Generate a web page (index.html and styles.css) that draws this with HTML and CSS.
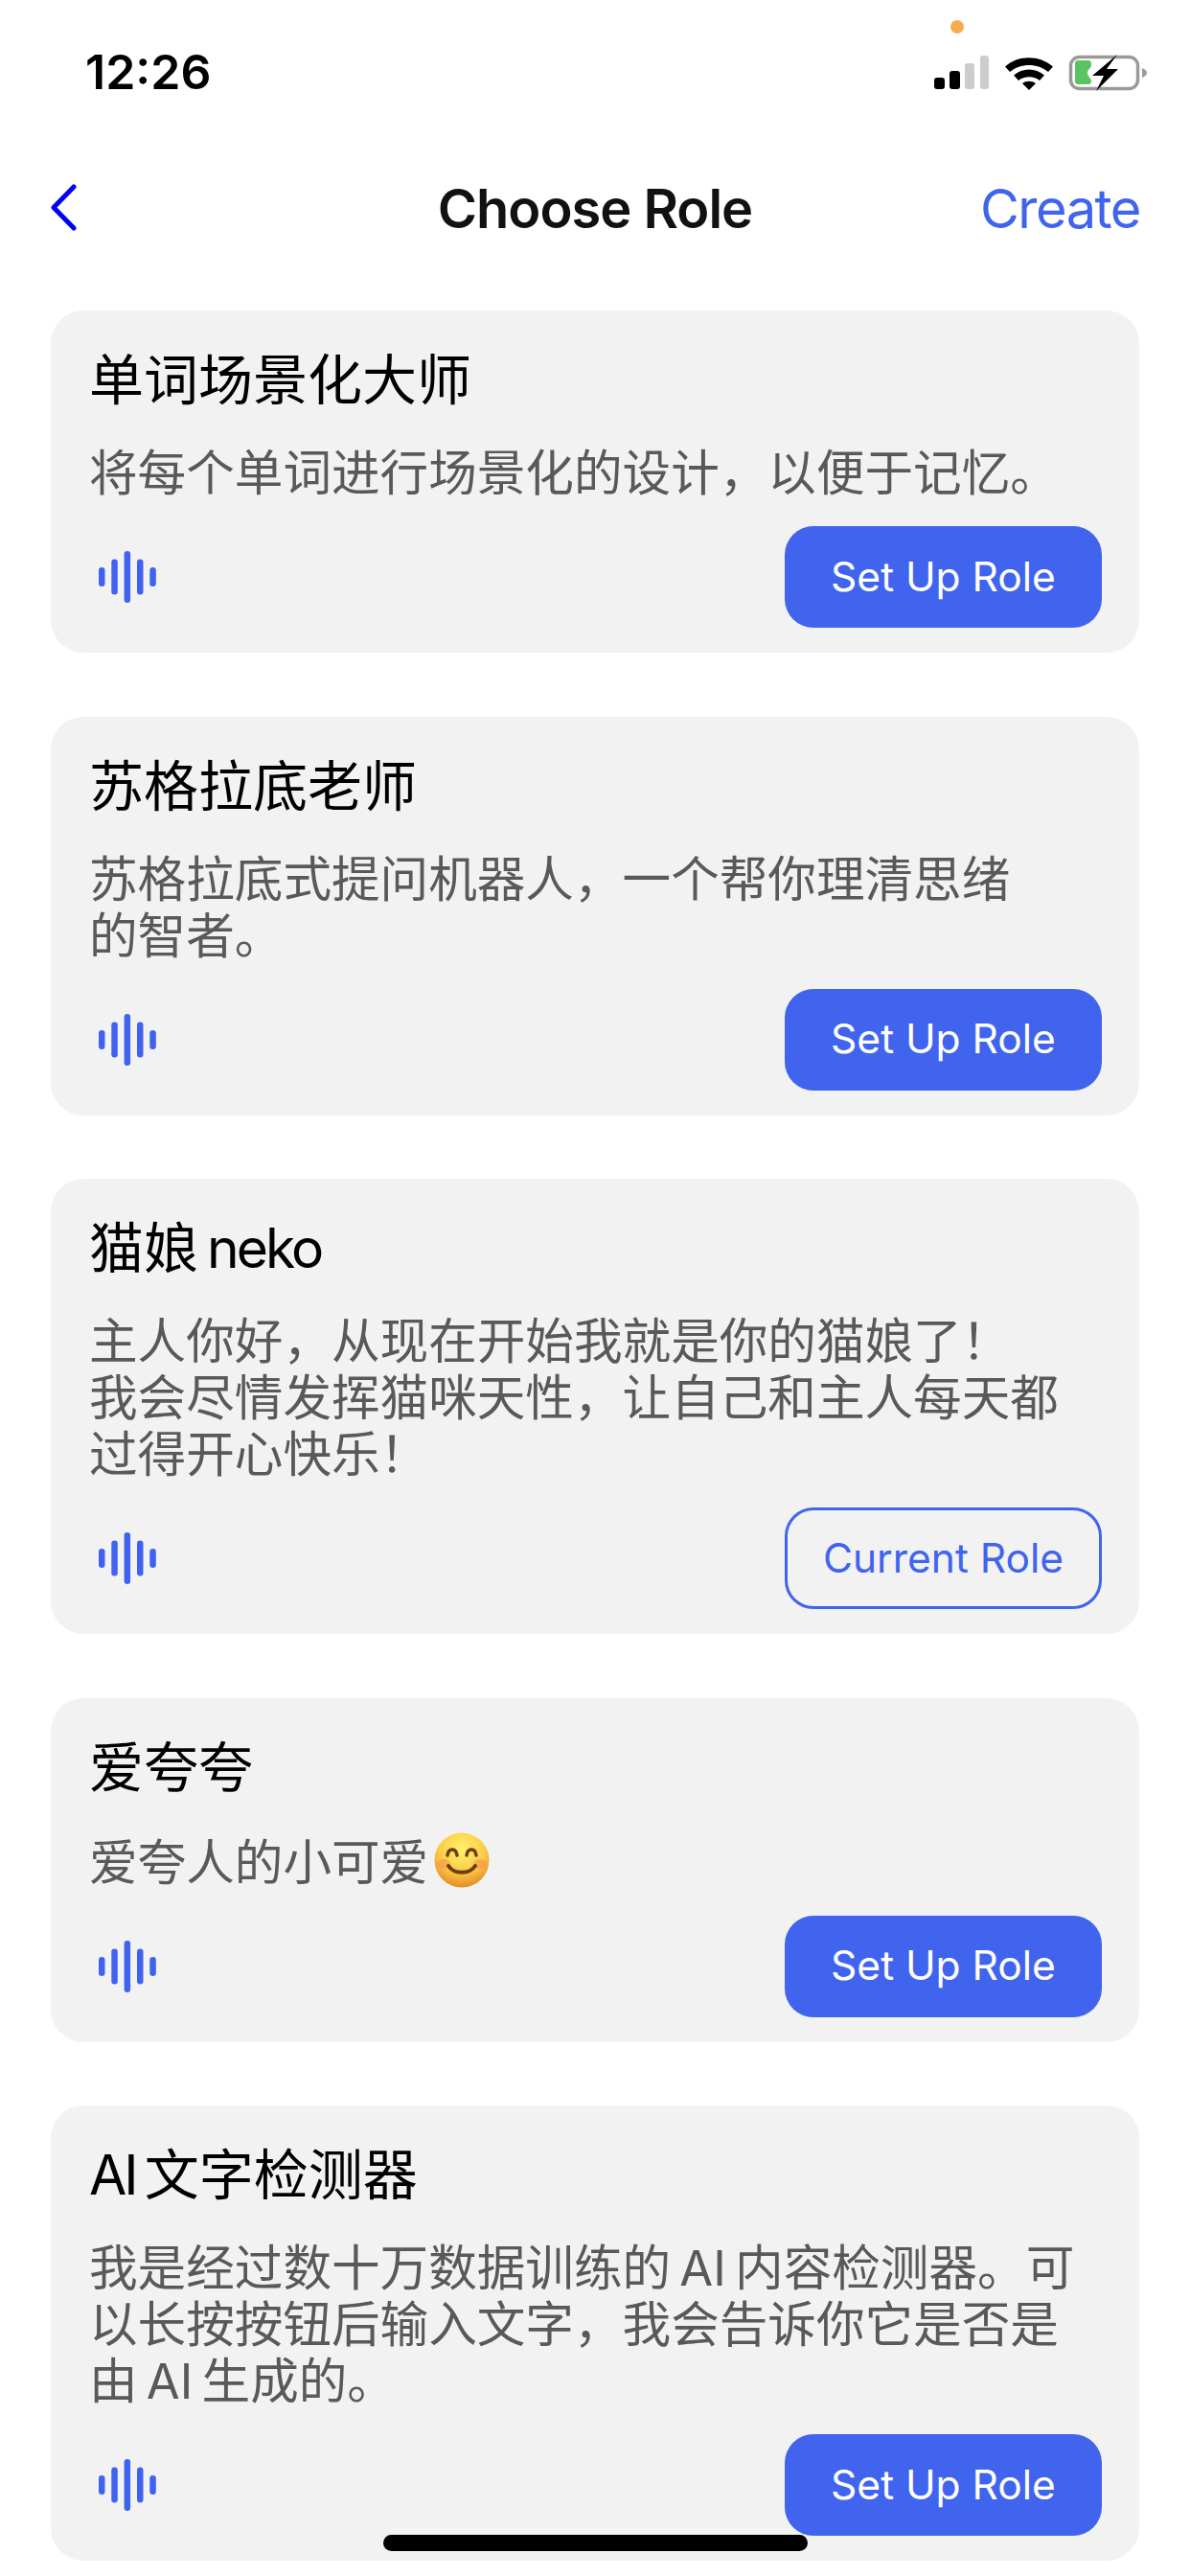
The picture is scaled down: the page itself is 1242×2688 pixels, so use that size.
FILE: index.html
```html
<!DOCTYPE html>
<html lang="zh-CN">
<head>
<meta charset="utf-8">
<title>Choose Role</title>
<link rel="stylesheet" href="styles.css">
</head>
<body>
<svg class="defs" width="0" height="0" aria-hidden="true">
  <symbol id="voice" viewBox="0 0 60 54">
    <rect x="0" y="17" width="6.5" height="20" rx="3.25"/>
    <rect x="13.3" y="8.5" width="6.5" height="37" rx="3.25"/>
    <rect x="26.6" y="0" width="6.5" height="54" rx="3.25"/>
    <rect x="40" y="8.5" width="6.5" height="37" rx="3.25"/>
    <rect x="53.3" y="17" width="6.5" height="20" rx="3.25"/>
  </symbol>
</svg>
<div class="screen">
  <header class="status">
    <span class="time">12:26</span>
    <span class="dot"></span>
    <svg class="status-icons" width="222" height="38" viewBox="0 0 222 38">
      <rect x="0" y="24" width="11" height="12" rx="3" fill="#000"/>
      <rect x="16" y="17" width="11" height="19" rx="3" fill="#000"/>
      <rect x="32" y="9" width="10" height="27" rx="3" fill="#ccc"/>
      <rect x="48" y="1" width="9" height="35" rx="3" fill="#ccc"/>
      <path d="M74 12.5C87 0 110 0 124 12.5L119 18C108 8.500 90 8.500 79 18Z" fill="#000"/>
      <path d="M83 21.500C92 13.500 106 13.500 115 21.500L110 27C104 22 94 22 88 27Z" fill="#000"/>
      <path d="M92 30C96 27 102 27 106 30L99 37Z" fill="#000"/>
      <rect x="142.500" y="2.500" width="70" height="33" rx="9" fill="none" stroke="#9a9a9a" stroke-width="3.500"/>
      <path d="M217 14C220 15 222 17 222 19C222 21 220 23 217 24Z" fill="#9a9a9a"/>
      <path d="M150 6H161C164 6 164 9 164 11C164 14 160 15 160 19C160 23 164 25 164 27C164 30 163 31 161 31H150C148 31 147 30 147 28V9C147 7 148 6 150 6Z" fill="#5ac463"/>
      <path d="M191 0L165 22H177L169 38L192 15H180Z" fill="#000"/>
    </svg>
  </header>
  <nav class="nav">
    <svg class="back" width="30" height="49" viewBox="0 0 30 49"><path d="M24 3L3 24.500L24 46" fill="none" stroke="#0000f5" stroke-width="5" stroke-linecap="round" stroke-linejoin="round"/></svg>
    <h1 class="nav-title">Choose Role</h1>
    <span class="nav-action">Create</span>
  </nav>
  <main class="list">
    <section class="card">
      <h2 class="card-title">单词场景化大师</h2>
      <p class="card-desc">将每个单词进行场景化的设计，以便于记忆。</p>
      <div class="card-foot">
        <svg class="voice" width="60" height="54"><use href="#voice"/></svg>
        <button class="btn">Set Up Role</button>
      </div>
    </section>
    <section class="card">
      <h2 class="card-title">苏格拉底老师</h2>
      <p class="card-desc">苏格拉底式提问机器人，一个帮你理清思绪<br>的智者。</p>
      <div class="card-foot">
        <svg class="voice" width="60" height="54"><use href="#voice"/></svg>
        <button class="btn">Set Up Role</button>
      </div>
    </section>
    <section class="card">
      <h2 class="card-title">猫娘 <span class="latin">neko</span></h2>
      <p class="card-desc">主人你好，从现在开始我就是你的猫娘了！<br>我会尽情发挥猫咪天性，让自己和主人每天都<br>过得开心快乐！</p>
      <div class="card-foot">
        <svg class="voice" width="60" height="54"><use href="#voice"/></svg>
        <button class="btn btn-current">Current Role</button>
      </div>
    </section>
    <section class="card">
      <h2 class="card-title">爱夸夸</h2>
      <p class="card-desc">爱夸人的小可爱<svg class="emoji" width="58" height="58" viewBox="0 0 58 58">
        <defs>
          <radialGradient id="face" cx="50%" cy="30%" r="70%">
            <stop offset="0%" stop-color="#fff36b"/>
            <stop offset="60%" stop-color="#fbcb47"/>
            <stop offset="100%" stop-color="#e58c26"/>
          </radialGradient>
        </defs>
        <circle cx="29" cy="29" r="28.500" fill="url(#face)"/>
        <ellipse cx="10" cy="33" rx="7" ry="5" fill="#f58f55" opacity=".55"/>
        <ellipse cx="48" cy="33" rx="7" ry="5" fill="#f58f55" opacity=".55"/>
        <path d="M14 24C15 16 23 16 24 24M34 24C35 16 43 16 44 24" fill="none" stroke="#6b3f12" stroke-width="3.500" stroke-linecap="round"/>
        <path d="M15 35C21 44 37 44 43 35" fill="none" stroke="#6b3f12" stroke-width="4" stroke-linecap="round"/>
      </svg></p>
      <div class="card-foot">
        <svg class="voice" width="60" height="54"><use href="#voice"/></svg>
        <button class="btn">Set Up Role</button>
      </div>
    </section>
    <section class="card">
      <h2 class="card-title"><span class="latin">AI</span> 文字检测器</h2>
      <p class="card-desc">我是经过数十万数据训练的 AI 内容检测器。可<br>以长按按钮后输入文字，我会告诉你它是否是<br>由 AI 生成的。</p>
      <div class="card-foot">
        <svg class="voice" width="60" height="54"><use href="#voice"/></svg>
        <button class="btn">Set Up Role</button>
      </div>
    </section>
  </main>
  <div class="home-bar"></div>
</div>
</body>
</html>
```
FILE: styles.css
```css
* { box-sizing: border-box; }
html, body { margin: 0; padding: 0; background: #fff; }
.defs { position: absolute; }
.screen {
  position: relative;
  width: 1242px;
  height: 2688px;
  overflow: hidden;
  font-family: Inter, "Noto Sans CJK SC", sans-serif;
  color: #000;
}
.status {
  display: flex;
  justify-content: space-between;
  align-items: flex-start;
  height: 170px;
  padding: 47px 45px 0 89px;
}
.time { font-size: 50px; font-weight: 600; line-height: 56px; color: #000; }
.status-icons { margin-top: 10px; }
.dot {
  position: absolute;
  left: 992px;
  top: 21px;
  width: 14px;
  height: 14px;
  border-radius: 50%;
  background: #f5ad4e;
}
.nav {
  display: flex;
  align-items: center;
  justify-content: space-between;
  height: 96px;
  padding: 0 52px 0 53px;
  position: relative;
}
.back { display: block; margin-top: -4px; }
.nav-title {
  margin: 0;
  position: absolute;
  left: 0;
  right: 0;
  text-align: center;
  font-size: 56px;
  font-weight: 600;
  line-height: 68px;
  letter-spacing: -1px;
  color: #111;
}
.nav-action { font-size: 56px; line-height: 68px; letter-spacing: -1.5px; color: #4064ee; }
.list {
  display: flex;
  flex-direction: column;
  gap: 66.5px;
  margin-top: 58px;
  padding: 0 53px;
}
.card {
  background: #f2f2f2;
  border-radius: 34px;
  padding: 39px 39px 26px 40px;
}
.card-title {
  margin: 0;
  font-size: 57px;
  font-weight: 400;
  line-height: 68px;
  word-spacing: -7px;
  color: #000;
}
.latin { letter-spacing: -3px; }
.card-desc {
  margin: 33px 0 0;
  font-size: 50.6px;
  line-height: 59px;
  word-spacing: -5px;
  color: #595959;
  white-space: nowrap;
}
.emoji { vertical-align: -8px; margin-left: 6px; }
.card-foot {
  display: flex;
  justify-content: space-between;
  align-items: center;
  margin-top: 26px;
}
.voice { display: block; margin-left: 10px; fill: #3f63ee; }
.btn {
  width: 331px;
  height: 106px;
  border: 0;
  border-radius: 30px;
  background: #4064ee;
  color: #fff;
  font: 400 42.5px/1 Inter, "Noto Sans CJK SC", sans-serif;
  padding: 0;
}
.btn-current {
  background: transparent;
  border: 3px solid #4064ee;
  color: #4064ee;
}
.home-bar {
  position: absolute;
  left: 400px;
  top: 2645px;
  width: 443px;
  height: 17px;
  border-radius: 9px;
  background: #000;
}
```
